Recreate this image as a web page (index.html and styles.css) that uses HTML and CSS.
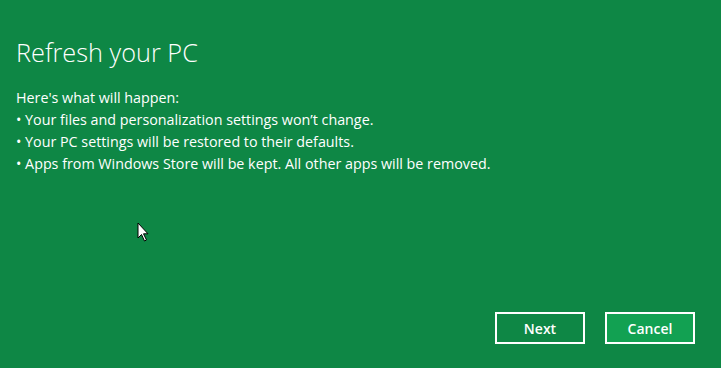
FILE: index.html
```html
<!DOCTYPE html>
<html lang="en">
<head>
    <meta charset="UTF-8">
    <meta name="viewport" content="width=device-width, initial-scale=1.0">
    <title>Refresh your PC</title>
    <link rel="stylesheet" href="styles.css">
</head>
<body>
    <div class="page">
        <h1 class="title">Refresh your PC</h1>
        <div class="info">
            <p>Here's what will happen:</p>
            <p>&bull; Your files and personalization settings won&#8217;t change.</p>
            <p>&bull; Your PC settings will be restored to their defaults.</p>
            <p>&bull; Apps from Windows Store will be kept. All other apps will be removed.</p>
        </div>
        <div class="actions">
            <button class="btn">Next</button>
            <button class="btn btn-cancel">Cancel</button>
        </div>

        <!-- mouse pointer -->
        <svg class="cursor" width="14" height="22" viewBox="0 0 14 22">
            <path d="M1 1 L1 16 L4.5 12.5 L7.5 19 L9.5 18 L6.5 11.8 L11 11.8 Z" fill="#ffffff" stroke="#000000" stroke-width="1"></path>
        </svg>
    </div>
</body>
</html>
```

FILE: styles.css
```css
html, body {
  margin: 0;
  padding: 0;
  height: 100%;
}

body {
  background-color: #0e8745;
  color: #ffffff;
  font-family: 'Open Sans', 'Noto Sans', sans-serif;
  overflow: hidden;
}

.page {
  position: relative;
  height: 368px;
  padding: 0 16px;
  box-sizing: border-box;
  display: flex;
  flex-direction: column;
}

.title {
  font-weight: 300;
  font-size: 25.3px;
  margin: 34px 0 0 0;
  line-height: 36px;
}

.info {
  margin-top: 17px;
  font-size: 14.3px;
}

.info p {
  margin: 0;
  line-height: 22px;
}

.actions {
  margin-top: auto;
  margin-bottom: 24px;
  display: flex;
  justify-content: flex-end;
  gap: 20px;
  padding-right: 10px;
}

.btn {
  width: 90px;
  height: 32px;
  background-color: transparent;
  border: 2px solid #ffffff;
  color: #ffffff;
  font-family: 'Open Sans', 'Noto Sans', sans-serif;
  font-weight: 600;
  font-size: 14px;
  padding: 0;
  cursor: pointer;
}

.btn-cancel {
  background-color: #12a152;
}

.cursor {
  position: absolute;
  left: 137px;
  top: 222px;
}
```
